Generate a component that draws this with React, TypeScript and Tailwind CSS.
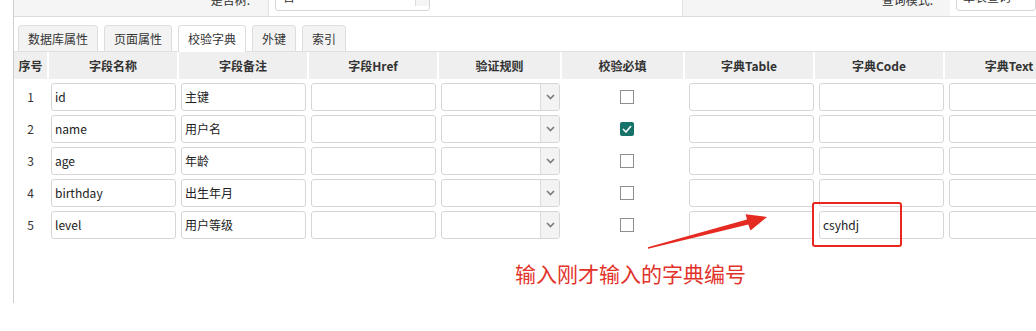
import React from "react";

const font = { fontFamily: '"Noto Sans CJK SC", "Liberation Sans", sans-serif' };

const rows = [
    { no: 1, name: "id", note: "主键", must: false, code: "" },
    { no: 2, name: "name", note: "用户名", must: true, code: "" },
    { no: 3, name: "age", note: "年龄", must: false, code: "" },
    { no: 4, name: "birthday", note: "出生年月", must: false, code: "" },
    { no: 5, name: "level", note: "用户等级", must: false, code: "csyhdj" },
];

const headers = ["序号", "字段名称", "字段备注", "字段Href", "验证规则", "校验必填", "字典Table", "字典Code", "字典Text"];
const tabs = ["数据库属性", "页面属性", "校验字典", "外键", "索引"];

function Input({ value, dict }: { value?: string; dict?: boolean }) {
    return (
        <div
            className={
                dict
                    ? "h-[28px] ml-[4px] -mr-[1px] border border-[#d6d6d6] rounded-[3px] bg-white flex items-center pl-[3px] text-[12px] text-[#222] overflow-hidden whitespace-nowrap"
                    : "h-[28px] ml-[2px] mr-[1px] border border-[#d6d6d6] rounded-[3px] bg-white flex items-center pl-[3px] text-[12px] text-[#222] overflow-hidden whitespace-nowrap"
            }
        >
            {value}
        </div>
    );
}

function Select() {
    return (
        <div className="h-[28px] ml-[2px] mr-[0px] border border-[#d6d6d6] rounded-[3px] bg-white flex justify-end overflow-hidden">
            <div className="w-[19px] h-full bg-[#f3f3f3] border-l border-[#dcdcdc] flex items-center justify-center">
                <svg width="9" height="6" viewBox="0 0 9 6">
                    <path d="M1 1 L4.5 4.5 L8 1" fill="none" stroke="#7a7a7a" strokeWidth="1.6" />
                </svg>
            </div>
        </div>
    );
}

function Check({ on }: { on: boolean }) {
    return (
        <div className="h-[28px] flex items-center justify-center pl-[9px]">
            {on ? (
                <div className="w-[14px] h-[14px] rounded-[2px] bg-[#17736a] flex items-center justify-center">
                    <svg width="10" height="8" viewBox="0 0 10 8">
                        <path d="M1 4 L4 7 L9 1" fill="none" stroke="#ffffff" strokeWidth="1.5" />
                    </svg>
                </div>
            ) : (
                <div className="w-[14px] h-[14px] border border-[#8f8f8f] bg-white" />
            )}
        </div>
    );
}

export default function App() {
    return (
        <div className="w-[1036px] h-[331px] bg-white relative overflow-hidden" style={font}>
            <div className="ml-[13px] w-[1023px] h-[303px] border-l border-[#cfcfcf]">
                {/* top form strip, cut off by the top of the page */}
                <div className="h-[17px] border-b border-[#dcdcdc] overflow-hidden">
                    <div className="h-[34px] -mt-[17px] flex text-[12px] text-[#333]">
                        <div className="w-[255px] bg-[#f5f5f5] border-r border-[#e2e2e2] flex items-center justify-end pr-[18px]">
                            是否树:
                        </div>
                        <div className="px-[6px]">
                            <div className="w-[155px] h-[28px] border border-[#d6d6d6] rounded-[3px] bg-white flex items-end justify-between pl-[7px] pb-[4px]">
                                <span>否</span>
                                <span className="w-[14px] h-[20px] border-l border-[#dcdcdc] bg-[#f5f5f5]" />
                            </div>
                        </div>
                        <div className="w-[246px]" />
                        <div className="w-[268px] bg-[#f5f5f5] border-l border-[#e2e2e2] flex items-center justify-end pr-[17px]">
                            查询模式:
                        </div>
                        <div className="pl-[6px] flex-1">
                            <div className="h-[28px] border border-[#d6d6d6] rounded-[3px] bg-white flex items-end pl-[6px] pb-[4px]">
                                单表查询
                            </div>
                        </div>
                    </div>
                </div>

                {/* tabs */}
                <div className="mt-[8px] border-b border-[#e0e0e0] flex gap-[6px] pl-[4px] h-[27px]">
                    {tabs.map((t, i) => (
                        <div
                            key={t}
                            className={
                                i === 2
                                    ? "h-[27px] px-[9px] border border-b-0 border-[#dedede] rounded-t-[4px] bg-white flex items-center text-[12px] text-[#333]"
                                    : "h-[26px] px-[9px] border border-b-0 border-[#dedede] rounded-t-[4px] bg-[#f3f3f3] flex items-center text-[12px] text-[#333]"
                            }
                        >
                            {t}
                        </div>
                    ))}
                </div>

                {/* field table */}
                <div className="grid grid-cols-[33px_128px_128px_128px_121px_121px_128px_128px_128px] gap-x-[2px] gap-y-[4px] auto-rows-[28px] [grid-template-rows:27px]">
                    {headers.map((h) => (
                        <div key={h} className="h-[27px] bg-[#efefef] flex items-center justify-center text-[12px] font-bold text-[#333] whitespace-nowrap">
                            {h}
                        </div>
                    ))}
                    {rows.map((r) => (
                        <React.Fragment key={r.no}>
                            <div className="h-[28px] flex items-center justify-center text-[12px] text-[#333]">{r.no}</div>
                            <Input value={r.name} />
                            <Input value={r.note} />
                            <Input />
                            <Select />
                            <Check on={r.must} />
                            <Input dict />
                            <Input dict value={r.code} />
                            <Input dict />
                        </React.Fragment>
                    ))}
                </div>
            </div>

            {/* annotation */}
            <div className="absolute left-[812px] top-[202px] w-[90px] h-[45px] border-2 border-[#e8271f] rounded-[3px]" />
            <svg className="absolute left-0 top-0" width="1036" height="331">
                <polygon
                    points="648.2,248.7 647.8,247.3 747.0,219.6 745.6,214.3 767,217 750.5,230.5 748.3,224.5"
                    fill="#e52a22"
                />
            </svg>
            <div className="absolute left-[515px] top-[259px] text-[21px] leading-[28px] text-[#e2332b] whitespace-nowrap">
                输入刚才输入的字典编号
            </div>
        </div>
    );
}
